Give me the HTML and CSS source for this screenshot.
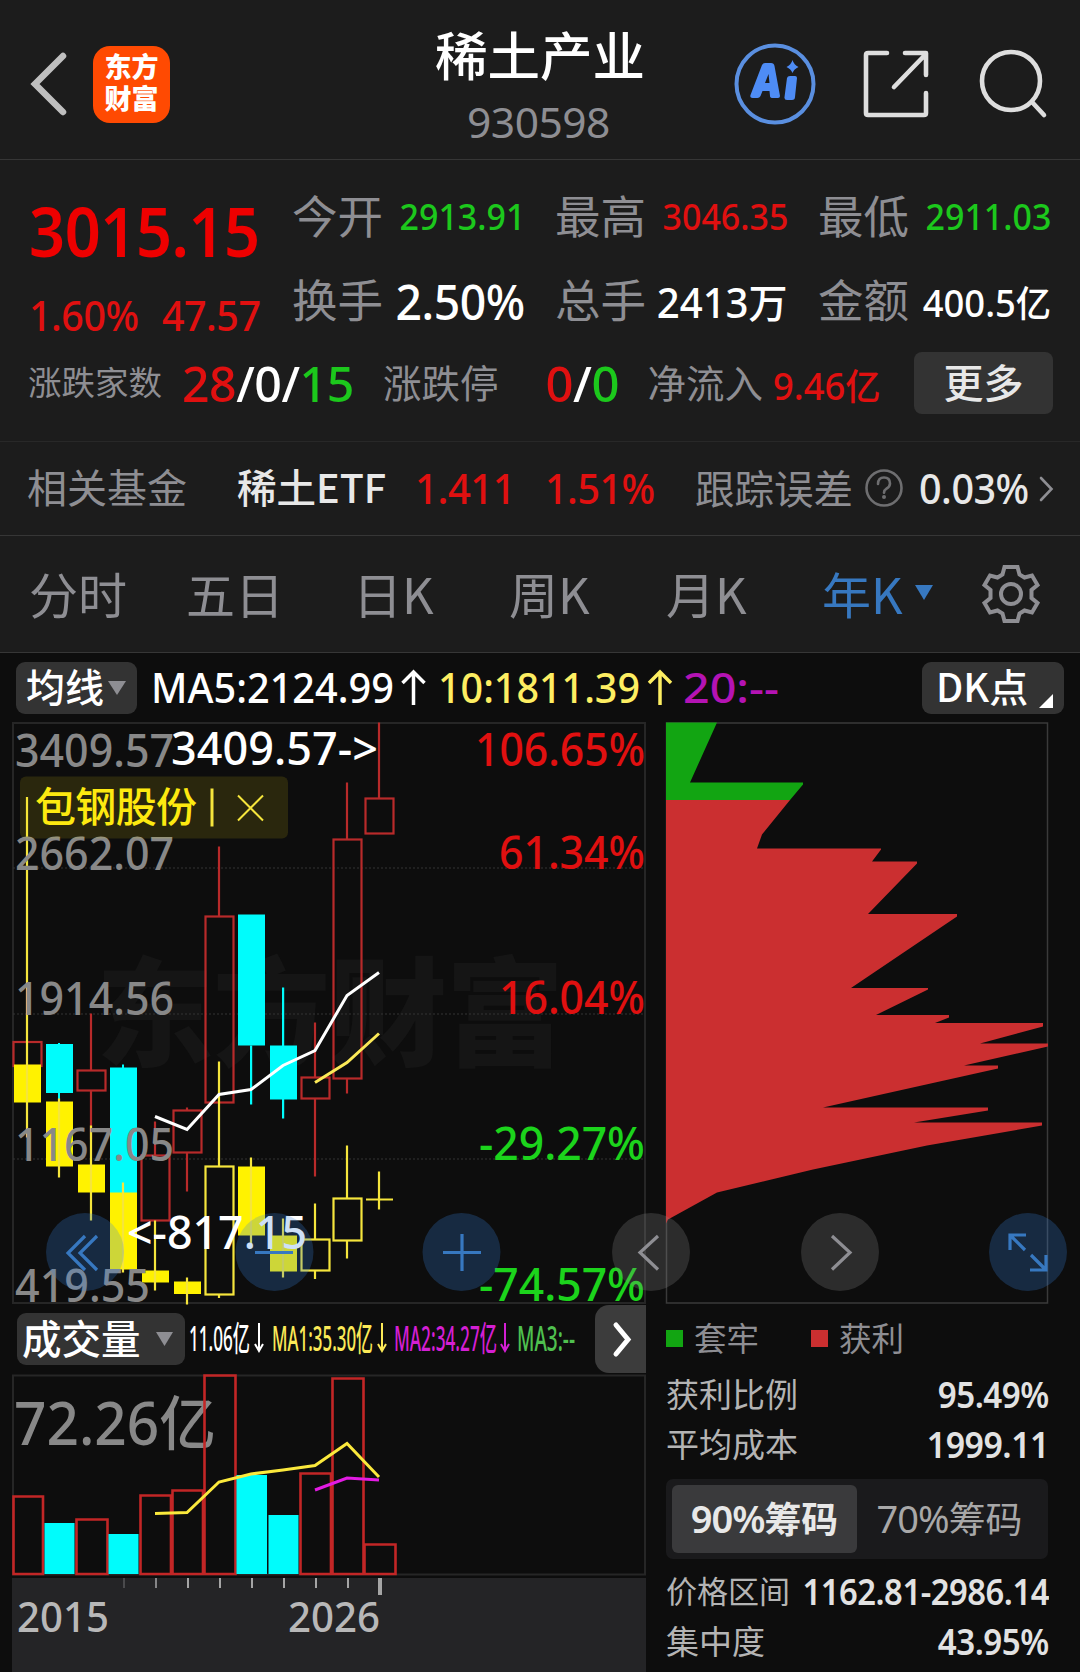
FILE: index.html
```html
<!DOCTYPE html>
<html lang="zh-CN">
<head>
<meta charset="utf-8">
<title>稀土产业 930598</title>
<link rel="stylesheet" href="styles.css">
</head>
<body>
<header class="topbar">
  <div class="topbar-left">
    <svg class="back" width="38" height="64" viewBox="0 0 38 64"><path d="M33 4 5 32l28 28" fill="none" stroke="#bfbfbf" stroke-width="6.500" stroke-linecap="round"/></svg>
    <div class="logo"><span>东方</span><span>财富</span></div>
  </div>
  <div class="title"><h1>稀土产业</h1><p>930598</p></div>
  <div class="topbar-right">
    <svg width="82" height="82" viewBox="0 0 82 82"><circle cx="41" cy="41" r="38.5" fill="none" stroke="#5a8fe0" stroke-width="4"/><path fill="#4e8cf5" fill-rule="evenodd" d="M28 22q1-2 3-2h6q3 0 3.500 3l5.500 30q0 2-2 2h-5q-3 0-3-2l-.5-5h-7l-2 5q-1 2-3 2h-5q-3 0-2-3zM31 40h4.500l-1-9zM53 35q.5-2 3-2h5q2 0 2 2l-2 19q0 3-3 3h-5q-3 0-2.500-3zM58.500 17q1.500 5 6 7-4.500 2-6 6-1.500-4-6-6 4.500-2 6-7z"/></svg>
    <svg width="66" height="68" viewBox="0 0 66 68"><path d="M24 3H5q-2 0-2 2v58q0 2 2 2h56q2 0 2-2V43M42 3h21v22M61 6 31 37" fill="none" stroke="#dedede" stroke-width="4.600" stroke-linecap="round" stroke-linejoin="round"/></svg>
    <svg width="68" height="70" viewBox="0 0 68 70"><circle cx="32" cy="32" r="29" fill="none" stroke="#dedede" stroke-width="4.600"/><path d="m53 53 12 13" stroke="#dedede" stroke-width="4.600" stroke-linecap="round"/></svg>
  </div>
</header>

<section class="quote">
  <div class="quote-main">
    <div class="price-box">
      <div class="price">3015.15</div>
      <div class="change"><span>1.60%</span><span>47.57</span></div>
    </div>
    <div class="stats">
      <div class="stat"><span class="label">今开</span><b class="v36 green">2913.91</b></div>
      <div class="stat"><span class="label">最高</span><b class="v36 red">3046.35</b></div>
      <div class="stat"><span class="label">最低</span><b class="v36 green">2911.03</b></div>
      <div class="stat"><span class="label">换手</span><b class="v49">2.50%</b></div>
      <div class="stat"><span class="label">总手</span><b class="v41">2413<i>万</i></b></div>
      <div class="stat"><span class="label">金额</span><b class="v38">400.5<i>亿</i></b></div>
    </div>
  </div>
  <div class="quote-more">
    <span class="label small">涨跌家数</span>
    <b class="v49 updown"><span class="red">28</span>/0/<span class="green">15</span></b>
    <span class="label mid">涨跌停</span>
    <b class="v49 limit"><span class="red">0</span>/<span class="green">0</span></b>
    <span class="label mid inflow-label">净流入</span>
    <b class="v38 red inflow">9.46<i>亿</i></b>
    <button class="more">更多</button>
  </div>
</section>

<section class="fund">
  <span class="label f-label">相关基金</span>
  <span class="f-name">稀土ETF</span>
  <span class="f-num red f-price">1.411</span>
  <span class="f-num red f-pct">1.51%</span>
  <span class="label f-track">跟踪误差</span>
  <svg class="help" width="38" height="38" viewBox="0 0 38 38"><circle cx="19" cy="19" r="17.500" fill="none" stroke="#6e6e70" stroke-width="2.600"/><path d="M13 15q0-6.500 6-6.500t6 6q0 3-3.500 5.200-2.500 1.600-2.500 4" fill="none" stroke="#6e6e70" stroke-width="2.600" stroke-linecap="round"/><circle cx="19" cy="28" r="2" fill="#6e6e70"/></svg>
  <span class="f-num f-err">0.03%</span>
  <svg class="go" width="16" height="28" viewBox="0 0 16 28"><path d="m3 3 10.500 11L3 25" fill="none" stroke="#8e8e93" stroke-width="2.600" stroke-linecap="round"/></svg>
</section>

<nav class="tabs">
  <span>分时</span><span>五日</span><span>日K</span><span>周K</span><span>月K</span>
  <span class="active">年K<svg width="18" height="16" viewBox="0 0 18 16"><path d="M0 0h18L9 15z" fill="#3778c0"/></svg></span>
  <svg class="gear" width="60" height="62" viewBox="-30 -31 60 62"><g fill="none" stroke="#8e8e93" stroke-width="4"><circle r="10"/><path stroke-linejoin="miter" d="M-6.500-27H6.500L8.500-19.500 13.500-16.500 21-18.500 26.500-9 20.500-4V4L26.500 9 21 18.500 13.500 16.500 8.500 19.500 6.500 27H-6.500L-8.500 19.500-13.500 16.500-21 18.500-26.500 9-20.500 4V-4L-26.500-9-21-18.500-13.500-16.500-8.500-19.500z"/></g></svg>
</nav>

<section class="ma-row">
  <button class="pill ma-btn"><span>均线</span><svg width="18" height="14" viewBox="0 0 18 14"><path d="M0 0h18L9 14z" fill="#8e8e93"/></svg></button>
  <svg class="ma-text" width="640" height="52" viewBox="145 661 640 52">
    <g class="num" font-size="42">
      <text x="151" y="702" fill="#fff" textLength="243" lengthAdjust="spacingAndGlyphs">MA5:2124.99</text>
      <text x="438" y="702" fill="#fdee62" textLength="202" lengthAdjust="spacingAndGlyphs">10:1811.39</text>
      <text x="683" y="702" fill="#b413b4" textLength="96" lengthAdjust="spacingAndGlyphs">20:--</text>
    </g>
    <path d="M413.500 704v-33m-11 11 11-11 11 11" fill="none" stroke="#fff" stroke-width="3.500"/>
    <path d="M660 704v-33m-11 11 11-11 11 11" fill="none" stroke="#fdee62" stroke-width="3.500"/>
  </svg>
  <button class="pill dk-btn"><span>DK点</span><svg width="14" height="14" viewBox="0 0 14 14"><path d="M14 0v14H0z" fill="#fff"/></svg></button>
</section>

<main class="board">
  <div class="col-left">
    <svg class="kline" width="634" height="582" viewBox="12 722.500 634 582">
      <text class="watermark" x="96" y="1057" textLength="468">东方财富</text>
      <g fill="none" stroke="#262626" stroke-width="2"><rect x="13" y="723.500" width="632" height="580"/></g>
      <g stroke="#353535" stroke-width="1" stroke-dasharray="2 2"><path d="M13 868.500H645M13 1014.500H645M13 1159.500H645"/></g>

      <g fill="none" stroke="#b82a2a" stroke-width="2.200">
        <rect x="13.500" y="1042.500" width="28" height="24"/>
        <path d="M91 1014V1071M91 1091V1140"/><rect x="77.500" y="1071" width="28" height="20"/>
        <path d="M155 1122V1156"/><rect x="141.500" y="1156" width="28" height="65"/>
        <path d="M187 1108V1111M187 1153V1192"/><rect x="173.500" y="1111" width="28" height="42"/>
        <path d="M219 847V917"/><rect x="205.500" y="917" width="28" height="186"/>
        <path d="M315 1023V1078M315 1099V1177"/><rect x="301.500" y="1078" width="28" height="21"/>
        <path d="M347 783V840M347 1079V1094"/><rect x="333.500" y="840" width="28" height="239"/>
        <path d="M379 723V799"/><rect x="365.500" y="799" width="28" height="35"/>
      </g>
      <g fill="#00fcfc">
        <rect x="46" y="1044.500" width="27" height="49"/><rect x="58" y="1043.500" width="2" height="58"/>
        <rect x="110" y="1068" width="27" height="126"/><rect x="122" y="1065" width="2" height="5"/>
        <rect x="238" y="915" width="27" height="131"/><rect x="250" y="1046" width="2.200" height="59"/>
        <rect x="270" y="1046" width="27" height="54"/><rect x="282" y="988" width="2.200" height="131"/>
      </g>
      <g fill="#fff200">
        <rect x="14" y="1065" width="27" height="38"/><rect x="46" y="1102" width="27" height="65"/>
        <rect x="78" y="1165" width="27" height="28"/><rect x="110" y="1193" width="27" height="77"/>
        <rect x="142" y="1271" width="27" height="12"/><rect x="174" y="1282" width="27" height="12.500"/>
        <rect x="238" y="1167" width="27" height="69"/><rect x="270" y="1236" width="27" height="36"/>
      </g>
      <g fill="none" stroke="#f5e53c" stroke-width="2.200">
        <path d="M27 797.500V1138M59 1099V1178M91 1126V1221M123 1183V1273M155 1221V1291M187 1278V1305M219 1062V1167M219 1295V1298.500M251 1158V1248M283 1219V1278M315 1204V1240M315 1271V1279.500M347 1146V1199M347 1241V1259M379 1172V1210M366 1200H393"/>
        <rect x="205.500" y="1167" width="28" height="128"/><rect x="301.500" y="1240" width="28" height="31"/><rect x="333.500" y="1199" width="28" height="42"/>
      </g>
      <path d="M155 1117 187 1130 219 1095 251 1090 283 1066 315 1051 347 996 379 973" fill="none" stroke="#fff" stroke-width="3"/>
      <path d="M315 1083 347 1063 379 1034" fill="none" stroke="#fbe957" stroke-width="3"/>

      <g class="num" font-size="46" fill="#888">
        <text x="15" y="767" textLength="159" lengthAdjust="spacingAndGlyphs">3409.57</text>
        <text x="15" y="870" textLength="159" lengthAdjust="spacingAndGlyphs">2662.07</text>
        <text x="15" y="1015" textLength="159" lengthAdjust="spacingAndGlyphs">1914.56</text>
        <text x="15" y="1161" textLength="159" lengthAdjust="spacingAndGlyphs">1167.05</text>
        <text x="15" y="1302" textLength="135" lengthAdjust="spacingAndGlyphs">419.55</text>
      </g>
      <g class="num" font-size="46" fill="#fff">
        <text x="171" y="765" textLength="207" lengthAdjust="spacingAndGlyphs">3409.57-&gt;</text>
        <text x="127" y="1249" textLength="180" lengthAdjust="spacingAndGlyphs">&lt;-817.15</text>
      </g>
      <g class="num" font-size="44.500">
        <g fill="#e01010">
          <text x="475" y="766.500" textLength="170" lengthAdjust="spacingAndGlyphs">106.65%</text>
          <text x="499" y="869.500" textLength="146" lengthAdjust="spacingAndGlyphs">61.34%</text>
          <text x="499" y="1014.500" textLength="146" lengthAdjust="spacingAndGlyphs">16.04%</text>
        </g>
        <g fill="#1cd41c">
          <text x="479" y="1160.500" textLength="166" lengthAdjust="spacingAndGlyphs">-29.27%</text>
          <text x="479" y="1301.500" textLength="166" lengthAdjust="spacingAndGlyphs">-74.57%</text>
        </g>
      </g>

      <rect x="20" y="777" width="268" height="62" rx="6" fill="#fde910" fill-opacity=".12"/>
      <text class="cjk" x="35" y="822" font-size="41" fill="#fde910" textLength="162">包钢股份</text>
      <path d="M212 789v38" stroke="#f5e53c" stroke-width="3"/>
      <path d="m238 796 25 25m0-25-25 25" stroke="#f5e53c" stroke-width="2"/>
    </svg>

    <div class="vol-row">
      <button class="pill vol-btn"><span>成交量</span><svg width="17" height="14" viewBox="0 0 17 14"><path d="M0 0h17L8.500 14z" fill="#8e8e93"/></svg></button>
      <svg class="vol-text" width="400" height="52" viewBox="188 1314 400 52">
        <g class="num mix" font-size="34">
          <text x="189" y="1352" fill="#fff" textLength="61" lengthAdjust="spacingAndGlyphs">11.06亿</text>
          <text x="272" y="1352" fill="#fbe957" textLength="101" lengthAdjust="spacingAndGlyphs">MA1:35.30亿</text>
          <text x="394" y="1352" fill="#d41fd4" textLength="103" lengthAdjust="spacingAndGlyphs">MA2:34.27亿</text>
          <text x="517" y="1352" fill="#4fc04f" textLength="58" lengthAdjust="spacingAndGlyphs">MA3:--</text>
        </g>
        <g fill="none" stroke-width="2"><path d="M259 1324v28m-4-7 4 7 4-7" stroke="#fff"/><path d="M382 1324v28m-4-7 4 7 4-7" stroke="#fbe957"/><path d="M505 1324v28m-4-7 4 7 4-7" stroke="#d41fd4"/></g>
      </svg>
      <button class="next"><svg width="22" height="36" viewBox="0 0 22 36"><path d="m4 4 12 14.500L4 33" fill="none" stroke="#fff" stroke-width="5" stroke-linecap="round"/></svg></button>
    </div>

    <svg class="volume" width="634" height="202" viewBox="12 1374 634 202">
      <rect x="13" y="1375.500" width="632" height="199" fill="none" stroke="#262626" stroke-width="2"/>
      <text class="num mix" x="14" y="1445" font-size="59" fill="#888" textLength="202" lengthAdjust="spacingAndGlyphs">72.26亿</text>
      <g fill="none" stroke="#c22626" stroke-width="2.600">
        <path d="M13.500 1574V1496.500H43V1574zM76.500 1574V1519.500H107.500V1574zM140.500 1574V1495.500H171V1574zM172.500 1574V1490.500H203V1574zM204.500 1574V1375.500H235.500V1574zM300.500 1574V1473.500H331V1574zM332.500 1574V1378.500H363.500V1574zM364.500 1574V1544.500H395.500V1574z"/>
      </g>
      <g fill="#00fcfc">
        <rect x="44.500" y="1523" width="30" height="51"/><rect x="108.500" y="1534" width="30" height="40"/><rect x="236.500" y="1475" width="30.500" height="99"/><rect x="268.500" y="1515" width="30" height="59"/>
      </g>
      <path d="M155 1513.500 187 1512.500 219 1482 251 1474 283 1470 315 1465.500 347 1443.500 379 1477" fill="none" stroke="#fbe93c" stroke-width="3"/>
      <path d="M315 1490 347 1478 379 1480" fill="none" stroke="#e31be3" stroke-width="3"/>
    </svg>

    <svg class="axis" width="634" height="94" viewBox="12 1578 634 94">
      <g stroke="#a5a5a5" stroke-width="2"><path d="M124 1578v10" stroke="#4a4a4c"/><path d="M156 1578v10" stroke="#858587"/><path d="M188 1578v10M220 1578v10M252 1578v10M284 1578v10M316 1578v10M348 1578v10"/><path d="M380 1578v17" stroke-width="4"/></g>
      <g class="num" font-size="42" fill="#b8b8b8">
        <text x="17" y="1632" textLength="92" lengthAdjust="spacingAndGlyphs">2015</text>
        <text x="288" y="1632" textLength="92" lengthAdjust="spacingAndGlyphs">2026</text>
      </g>
    </svg>
  </div>

  <aside class="col-right">
    <svg class="chips" width="384" height="582" viewBox="665 722.500 384 582">
      <rect x="666.500" y="723.500" width="381" height="580" fill="none" stroke="#3a3a3a" stroke-width="1.500"/>
      <path fill="#12a512" d="M666 723H717L690 783H803V785L790 800.500H666z"/>
      <path fill="#cb2f30" d="M666 800.500H790L762 835 757 849H881V850L872 862H917V864L868 914.500H957V917L851 988.500H928V990L876 1015.500H949V1018L935 1023.500H1043V1027L980 1044H1048V1047L964 1066H998V1069L823 1108H988V1111L914 1123H1042V1126L927 1146 813 1170 717 1193 668 1220 666 1224z"/>
    </svg>
    <div class="legend"><i class="sq sq-g"></i><span>套牢</span><i class="sq sq-r"></i><span>获利</span></div>
    <div class="kv"><span>获利比例</span><b>95.49%</b></div>
    <div class="kv"><span>平均成本</span><b class="avg">1999.11</b></div>
    <div class="seg"><span class="on">90%<i>筹码</i></span><span>70%<i>筹码</i></span></div>
    <div class="kv narrow"><span>价格区间</span><b>1162.81-2986.14</b></div>
    <div class="kv"><span>集中度</span><b>43.95%</b></div>
  </aside>

  <div class="controls">
    <svg width="1060" height="80" viewBox="12 1212 1060 80">
      <g fill="#3985e1" fill-opacity=".25"><circle cx="85" cy="1252" r="39"/><circle cx="274.500" cy="1252" r="39"/><circle cx="461.500" cy="1252" r="39"/><circle cx="1028" cy="1252" r="39"/></g>
      <g fill="#8c8c8c" fill-opacity=".25"><circle cx="651" cy="1252" r="39"/><circle cx="840" cy="1252" r="39"/></g>
      <g fill="none" stroke="#3778c0" stroke-width="3.200"><path d="M85 1236 68 1253l17 17M97 1236 80 1253l17 17M255 1252.500h38M443 1252.500h38M462 1234v37M1010 1250v-15h16M1010 1235l15 15M1046 1255v15h-16M1046 1270l-15-15"/></g>
      <g fill="none" stroke="#8e8e93" stroke-width="3.200"><path d="m658 1236-18 16.500 18 17M832 1236l18 16.500-18 17"/></g>
    </svg>
  </div>
</main>
</body>
</html>
```
FILE: styles.css
```css
* { box-sizing: border-box; }
body {
  margin: 0;
  width: 1080px;
  height: 1672px;
  overflow: hidden;
  background: #0d0d0d;
  color: #fff;
  font-family: "Noto Sans", "Noto Sans CJK SC", sans-serif;
}
svg { display: block; flex: none; overflow: visible; }
b { font-weight: 500; }
i { font-style: normal; letter-spacing: 0; font-size: .97em; }
button { border: 0; padding: 0; color: inherit; font-family: inherit; }
span, b { white-space: nowrap; }

.red { color: #e01010; }
.green { color: #1cc81c; }
.label { color: #8e8e93; font-family: "Noto Sans CJK SC", sans-serif; padding-bottom: 5px; }
.num { font-family: "Noto Sans", sans-serif; font-weight: 500; }
.mix { font-family: "Noto Sans", "Noto Sans CJK SC", sans-serif; font-weight: 500; }
.cjk { font-family: "Noto Sans CJK SC", sans-serif; font-weight: 500; }

/* top bar */
.topbar {
  height: 160px;
  display: grid;
  grid-template-columns: 1fr 240px 1fr;
  background: #1c1c1c;
  border-bottom: 1px solid #363636;
}
.topbar-left { display: flex; align-items: center; gap: 26px; padding: 9px 0 0 30px; }
.logo {
  width: 77px; height: 77px; margin-left: -1px;
  border-radius: 17px;
  background: #ff4a02;
  display: flex; flex-direction: column; align-items: center; justify-content: center;
  padding-bottom: 4px;
  font: 900 27px/32px "Noto Sans CJK SC", sans-serif;
}
.title { text-align: center; padding-top: 17px; }
.title h1 { margin: 0; font: 500 52.500px/72px "Noto Sans CJK SC", sans-serif; }
.title p { margin: 3px 0 0 -3px; font-size: 42.500px; line-height: 60px; color: #8e8e93; letter-spacing: -.5px; }
.topbar-right { display: flex; align-items: center; justify-content: flex-end; padding: 8px 33px 0 0; }
.topbar-right svg:nth-child(2) { margin: 0 50px 0 47px; }

/* quote */
.quote { height: 282px; background: #1c1c1c; border-bottom: 1px solid #282828; }
.quote-main { display: flex; padding: 14px 28px 0 29px; height: 170px; }
.price-box { width: 263px; }
.price, .change { transform-origin: left; white-space: nowrap; }
.price { margin-top: 11px; font-size: 68px; line-height: 92px; font-weight: 600; color: #ee0000; letter-spacing: -.5px; transform: scaleX(.928); }
.change { display: flex; gap: 25px; margin-top: 5px; font-size: 42px; line-height: 66px; font-weight: 500; color: #e01010; letter-spacing: -.5px; transform: scaleX(.938); }
.stats { flex: 1; display: grid; grid-template-columns: 233px 233px 233px; column-gap: 30px; grid-auto-rows: 84px; margin-right: -4px; }
.stat { display: flex; align-items: center; justify-content: space-between; }
.stat b { transform-origin: right; margin-top: 1px; }
.stat .label { font-size: 45.500px; line-height: 79px; margin-top: 1px; }
.v36 { font-size: 36px; transform: scaleX(.943); }
.v38 { font-size: 38px; transform: scaleX(.957); }
.v41 { font-size: 41px; transform: scaleX(.98); }
.v49 { font-size: 49px; letter-spacing: -.5px; transform: scaleX(.945); }
.quote-more { display: flex; align-items: center; height: 106px; padding-left: 28px; }
.quote-more b { transform-origin: left; }
.small { font-size: 33.500px; width: 154px; }
.mid { font-size: 38.500px; }
.updown { width: 201px; transform: scaleX(.985); }
.limit { margin-left: 47px; width: 102px; transform: none; }
.inflow { margin-left: 10px; width: 110px; margin-top: 2px; }
.more { margin-left: auto; margin-right: 27px; width: 139px; height: 62px; padding-bottom: 4px; border-radius: 8px; background: #333; color: #e8e8e8; font: 500 40px/54px "Noto Sans CJK SC", sans-serif; }

/* related fund */
.fund { height: 94px; display: flex; align-items: center; padding-left: 27px; background: #1c1c1c; border-bottom: 1px solid #363636; }
.fund .f-label { font-size: 40px; width: 210px; }
.f-name { font: 500 39.500px/60px "Noto Sans CJK SC", sans-serif; color: #e8e8e8; width: 178px; padding-bottom: 5px; }
.f-num { font-size: 42px; font-weight: 500; letter-spacing: -.5px; padding-bottom: 2px; transform: scaleX(.94); transform-origin: left; }
.f-price { width: 130px; transform: scaleX(.955); }
.f-pct { width: 150px; }
.f-track { font-size: 39.500px; width: 170px; }
.help { margin-bottom: 2px; }
.f-err { width: 110px; margin-left: 16px; color: #e8e8e8; }
.go { margin-left: auto; margin-right: 26px; }

/* period tabs */
.tabs { height: 117px; display: grid; grid-template-columns: 157px 167px 156px 157px 156px 1fr auto; align-items: center; padding: 0 39px 0 29px; background: #1c1c1c; border-bottom: 1px solid #363636; }
.tabs span { font: 400 49px/70px "Noto Sans CJK SC", sans-serif; color: #8e8e93; padding-bottom: 3px; }
.tabs .active { color: #3778c0; display: flex; align-items: center; gap: 12px; }

/* moving average row */
.ma-row { height: 69px; display: flex; align-items: center; padding: 0 16px; }
.pill { display: flex; align-items: center; height: 52px; border-radius: 9px; background: #333; color: #fff; font: 500 39px/46px "Noto Sans CJK SC", sans-serif; }
.pill span { padding-bottom: 5px; }
.ma-btn { width: 121px; padding-left: 10px; gap: 4px; }
.ma-text { margin-left: 8px; }
.dk-btn { width: 142px; margin-left: auto; padding-left: 14px; gap: 11px; }
.dk-btn svg { margin-top: 26px; }

/* chart board */
.board { position: relative; display: flex; height: 950px; padding-left: 12px; gap: 19px; }
.col-left { width: 634px; flex: none; display: flex; flex-direction: column; }
.watermark { font: 900 118px "Noto Sans CJK SC", sans-serif; fill: #151515; }
.vol-row { height: 70px; display: flex; align-items: center; padding-left: 5px; }
.vol-btn { width: 168px; padding-left: 5px; gap: 15px; font-size: 39.500px; }
.vol-text { margin-left: 3px; }
.next { margin-left: auto; width: 51px; height: 68px; padding-left: 5px; border-radius: 14px 0 0 14px; background: #3c3c3c; display: flex; align-items: center; justify-content: center; }
.axis { margin-top: 2px; background: #242426; }

.col-right { width: 384px; }
.legend { display: flex; align-items: center; height: 66px; padding: 2px 0 0 1px; font: 400 32.500px/50px "Noto Sans CJK SC", sans-serif; color: #8e8e93; }
.legend span { padding-bottom: 2px; }
.sq { width: 17px; height: 17px; margin-right: 11px; }
.sq-g { background: #12a512; }
.sq-r { background: #cb2f30; margin-left: 52px; }
.kv { height: 50px; display: flex; align-items: center; justify-content: space-between; padding-left: 1px; }
.kv span { font: 400 33px/46px "Noto Sans CJK SC", sans-serif; color: #b4b4b4; padding-bottom: 4px; }
.kv b { font-size: 36px; line-height: 50px; font-weight: 600; color: #e2e2e2; letter-spacing: -.5px; transform: scaleX(.92); transform-origin: right; }
.kv .avg { transform: scaleX(.94); }
.kv.narrow span { font-size: 31px; }
.kv.narrow b { margin-left: -30px; transform: scaleX(.91); }
.seg { display: flex; height: 80px; margin: 9px 0 8px 1px; width: 382px; padding: 6px; border-radius: 7px; background: #1a1a1c; font-size: 38px; line-height: 66px; letter-spacing: -1px; color: #a8a8a8; }
.seg span { flex: 1; text-align: center; }
.seg .on { background: #3a3a3c; border-radius: 6px; color: #e8e8e8; font-weight: 600; }

.controls { position: absolute; left: 12px; top: 490px; }
```
